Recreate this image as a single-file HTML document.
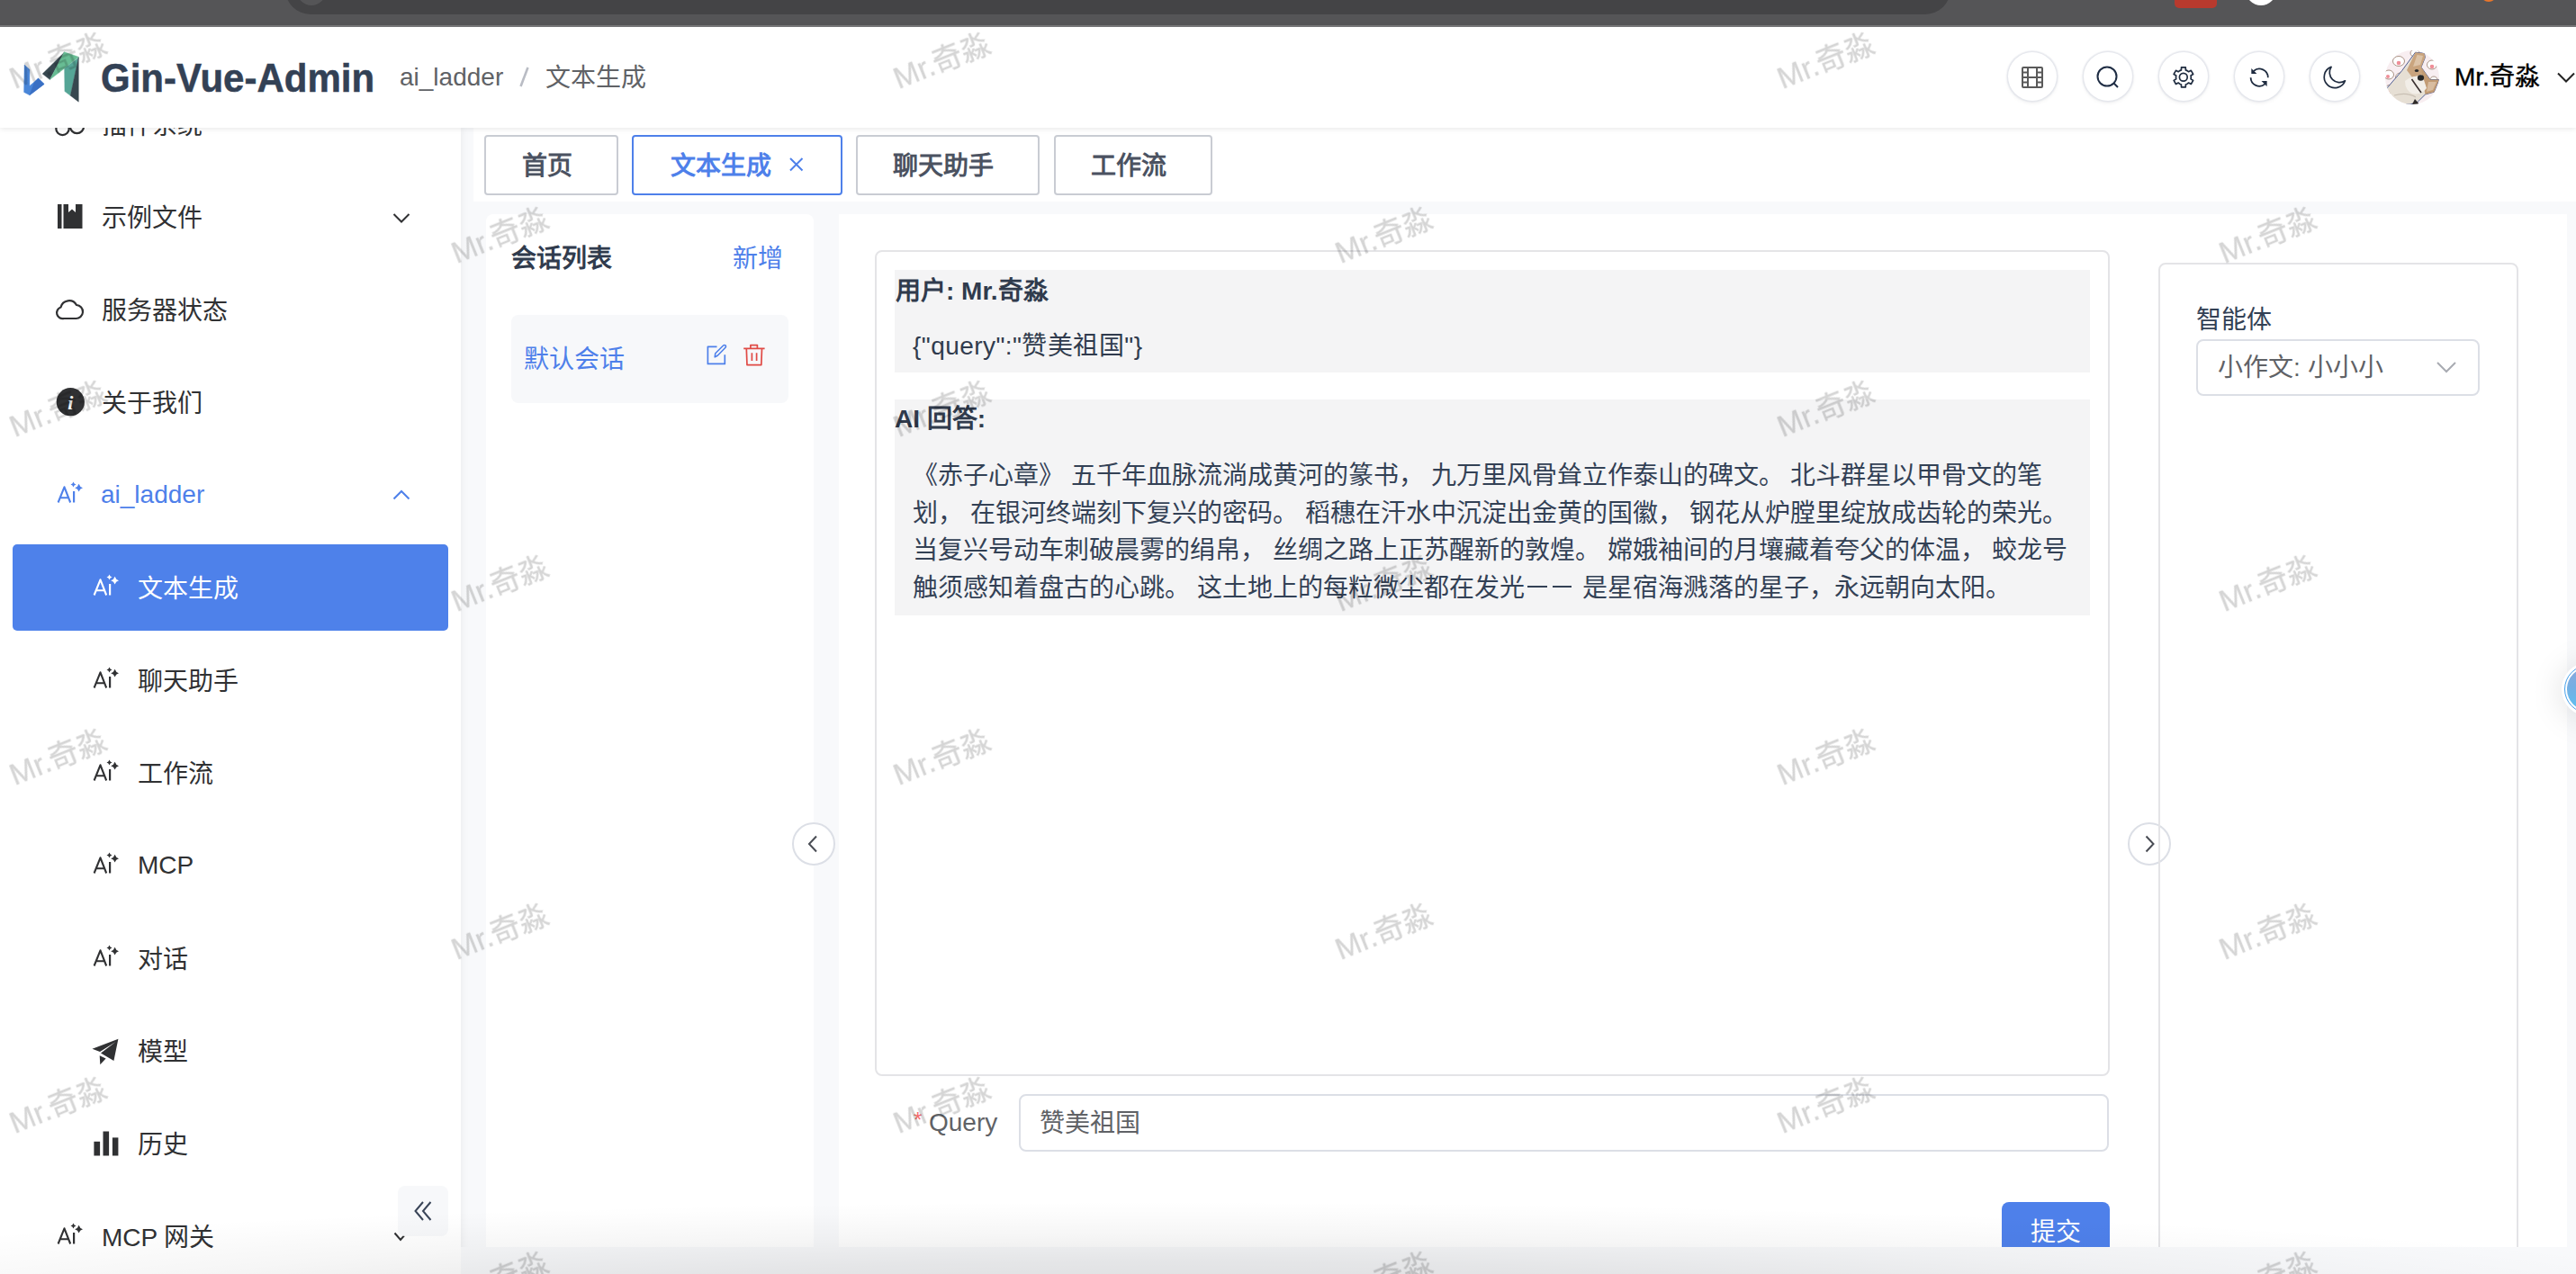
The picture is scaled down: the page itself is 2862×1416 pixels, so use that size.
<!DOCTYPE html>
<html lang="zh-CN"><head><meta charset="utf-8">
<style>
*{box-sizing:border-box;margin:0;padding:0}
html,body{width:2862px;height:1416px;overflow:hidden;background:#f8f9fb;font-family:"Liberation Sans",sans-serif;color:#303133}
.a{position:absolute;white-space:nowrap}
.t28{font-size:28px;line-height:40px}
/* browser bar */
#bbar{position:absolute;left:0;top:0;width:2862px;height:30px;background:#555557;border-bottom:2px solid #78787a}
#pill{position:absolute;left:317px;top:-12px;width:1850px;height:28px;background:#444446;border-radius:0 0 28px 28px}
/* header */
#hdr{position:absolute;left:0;top:30px;width:2862px;height:112px;background:#fff;box-shadow:0 1px 6px rgba(0,0,0,0.1);z-index:5}
/* sidebar */
#side{position:absolute;left:0;top:142px;width:512px;height:1274px;background:#fff;box-shadow:2px 0 8px rgba(0,0,0,0.05);z-index:2}
.mi{position:absolute;left:0;width:512px;height:96px}
.ic{position:absolute}
.tabbar{position:absolute;left:526px;top:142px;width:2336px;height:82px;background:#fff}
.tab{position:absolute;top:150px;height:67px;border:2px solid #c9ccd3;border-radius:4px;background:#fff;font-size:28px;line-height:66px;font-weight:bold;color:#4b5261;text-align:left}
.panel{position:absolute;background:#fff}
.circ{position:absolute;width:54px;height:54px;border-radius:50%;background:#fff;box-shadow:0 0 1.5px 1.5px #e3e5eb,0 2px 5px rgba(0,0,0,0.07)}
</style></head><body>

<div id="bbar"><div id="pill"></div>
<div class="a" style="left:330px;top:-26px;width:32px;height:32px;border-radius:50%;background:#555557"></div>
<div class="a" style="left:2416px;top:-10px;width:47px;height:19px;border-radius:5px;background:#b83a2e"></div>
<div class="a" style="left:2495px;top:-28px;width:34px;height:34px;border-radius:50%;background:#fff"></div>
<div class="a" style="left:2756px;top:-16px;width:18px;height:18px;border-radius:50%;background:#e8762c"></div>
</div>

<div id="hdr">
  <!-- logo -->
  <svg class="a" style="left:0;top:-30px" width="100" height="150" viewBox="0 0 100 150">
    
    <polygon points="27.1,72 32.9,77.2 32.9,95.6 42.5,87.1 49.1,93.4 32.9,105.8 26.6,102.5" fill="#4a86d8" stroke="#4a86d8" stroke-width="0.4" stroke-linejoin="round"/>
    <polygon points="42.5,87.1 49.1,93.4 32.9,105.8 38,92" fill="#3a70c4" stroke="#3a70c4" stroke-width="0.4" stroke-linejoin="round"/>
    <polygon points="47.2,82.1 71.4,58.2 55.4,88.5" fill="#37474f" stroke="#37474f" stroke-width="0.4" stroke-linejoin="round"/>
    <polygon points="71.4,57.7 87.3,63.2 71.6,76.1 55.4,88.5" fill="#68bd94" stroke="#68bd94" stroke-width="0.4" stroke-linejoin="round"/>
    <polygon points="71.6,76.1 87.3,64 78.2,106.3 71.9,101.6" fill="#55a596" stroke="#55a596" stroke-width="0.4" stroke-linejoin="round"/>
    <polygon points="87.3,63.5 87.3,113.2 78.2,106.3" fill="#37474f" stroke="#37474f" stroke-width="0.4" stroke-linejoin="round"/>
  </svg>
  <div class="a" style="left:112px;top:28px;font-size:42px;line-height:60px;font-weight:bold;color:#334155;transform:scale(1,1.07);transform-origin:0 44.5px;-webkit-text-stroke:0.5px #334155">Gin-Vue-Admin</div>
  <div class="a t28" style="left:444px;top:36px;color:#606266">ai_ladder</div>
  <svg class="a" style="left:570px;top:40px" width="24" height="30"><line x1="16.5" y1="5" x2="8.5" y2="26" stroke="#b9bcc4" stroke-width="2.6"/></svg>
  <div class="a t28" style="left:606px;top:37px;color:#606266">文本生成</div>

  <!-- circle buttons -->
  <div class="circ" style="left:2231px;top:28px"></div>
  <div class="circ" style="left:2315px;top:28px"></div>
  <div class="circ" style="left:2399px;top:28px"></div>
  <div class="circ" style="left:2483px;top:28px"></div>
  <div class="circ" style="left:2567px;top:28px"></div>
  <svg class="a" style="left:0;top:0" width="2862" height="112" viewBox="0 30 2862 112">
    <!-- grid/film icon -->
    <g fill="none" stroke="#5a5a5a" stroke-width="2">
      <rect x="2247" y="75" width="22" height="22" rx="1"/>
      <line x1="2253" y1="75" x2="2253" y2="97"/>
      <line x1="2263" y1="75" x2="2263" y2="97"/>
      <line x1="2253" y1="86" x2="2263" y2="86"/>
      <line x1="2247" y1="80.5" x2="2253" y2="80.5"/><line x1="2247" y1="86" x2="2253" y2="86"/><line x1="2247" y1="91.5" x2="2253" y2="91.5"/>
      <line x1="2263" y1="80.5" x2="2269" y2="80.5"/><line x1="2263" y1="86" x2="2269" y2="86"/><line x1="2263" y1="91.5" x2="2269" y2="91.5"/>
    </g>
    <!-- search -->
    <g fill="none" stroke="#1f2d44" stroke-width="2">
      <circle cx="2341" cy="85" r="10.5"/>
      <line x1="2348.5" y1="92.5" x2="2353" y2="97"/>
    </g>
    <!-- gear -->
    <g fill="none" stroke="#1e2b3f" stroke-width="1.7" stroke-linejoin="round">
      <path d="M2421.70,78.63 L2423.44,77.87 L2423.55,74.85 L2428.25,74.85 L2428.36,77.87 L2430.10,78.63 L2431.63,79.76 L2434.30,78.34 L2436.65,82.41 L2434.08,84.01 L2434.30,85.90 L2434.08,87.79 L2436.65,89.39 L2434.30,93.46 L2431.63,92.04 L2430.10,93.17 L2428.36,93.93 L2428.25,96.95 L2423.55,96.95 L2423.44,93.93 L2421.70,93.17 L2420.17,92.04 L2417.50,93.46 L2415.15,89.39 L2417.72,87.79 L2417.50,85.90 L2417.72,84.01 L2415.15,82.41 L2417.50,78.34 L2420.17,79.76 Z"/>
      <circle cx="2425.8" cy="85.8" r="4.4"/>
    </g>
    <!-- refresh -->
    <g fill="none" stroke="#1e2b3f" stroke-width="1.8">
      <path d="M2519.8,86.2 A9.6,9.6 0 0 0 2503.8,79"/>
      <path d="M2500.6,86.2 A9.6,9.6 0 0 0 2516.4,93.4"/>
    </g>
    <g fill="#1e2b3f">
      <path d="M2501.3,76 L2501.3,82.1 L2507.4,82.1 Z"/>
      <path d="M2518.6,90 L2518.6,96.1 L2512.5,90 Z"/>
    </g>
    <!-- moon -->
    <path d="M2590.1,74.4 A12,12 0 1 0 2605.5,89.8 A11.1,11.1 0 0 1 2590.1,74.4 Z" fill="none" stroke="#1e2b3f" stroke-width="1.7" stroke-linejoin="round"/>
    <!-- chevron -->
    <polyline points="2842,81.5 2851,90.5 2860,81.5" fill="none" stroke="#222" stroke-width="2"/>
  </svg>
  <!-- avatar -->
  <div class="a" style="left:2650px;top:26px;width:60px;height:60px;border-radius:50%;overflow:hidden">
    <svg width="60" height="60" viewBox="0 0 60 60">
      <rect width="60" height="60" fill="#f8eef1"/>
      <g fill="#fff" stroke="#a08878" stroke-width="0.9">
        <ellipse cx="15" cy="12" rx="6.5" ry="5.5"/><ellipse cx="4" cy="27" rx="5.5" ry="5"/><ellipse cx="17" cy="30" rx="5.5" ry="5"/><ellipse cx="33" cy="3" rx="5" ry="4"/><ellipse cx="52" cy="16" rx="5.5" ry="5"/><ellipse cx="54" cy="34" rx="4.5" ry="5"/><ellipse cx="5" cy="43" rx="5" ry="4.5"/>
      </g>
      <g fill="#ef8e98"><circle cx="15" cy="14" r="2.3"/><circle cx="3" cy="29" r="2"/><circle cx="52" cy="18" r="2.3"/><circle cx="5" cy="45" r="2"/><circle cx="17" cy="33" r="1.8"/></g>
      <path d="M2.1,41.8 L18.6,22.6 L33.5,2.2 L43.4,3.3 L44.4,7.7 L40,18.7 L49.9,32.5 L59.8,32.5 L54.3,46.2 L44.5,49 L36.2,57.2 L28,60 L0,60 Z" fill="#e6dfd4" stroke="#3d4f8a" stroke-width="0.9"/>
      <path d="M33.5,2.2 L43.4,3.3 L44.4,7.7 L40,18.7 L44,26 L30,30 L24,22 Z" fill="#c9a47e"/>
      <path d="M35.5,5 L42,6 L39,16 L31,18 Z" fill="#dcc3a8"/>
      <path d="M40,18.7 L49.9,32.5 L59.8,32.5 L54.3,46.2 L44.5,49 L42,36 Z" fill="#c29b74"/>
      <path d="M48,35 L57,35 L53,44 L46,46 Z" fill="#d8bca0"/>
      <path d="M22,34 Q32,26 42,30 L46,42 Q40,50 30,48 Q22,44 22,34 Z" fill="#f2eee8"/>
      <ellipse cx="39.5" cy="30.5" rx="3.6" ry="3.2" fill="#262626"/>
      <ellipse cx="35" cy="22.6" rx="2.2" ry="1.5" fill="#2a2a2a"/>
      <path d="M29.5,32 L35,40 L40,47" stroke="#3a3030" stroke-width="1.6" fill="none"/>
      <path d="M10,50 Q24,46 34,52" stroke="#c9c0b4" stroke-width="1.2" fill="none"/>
      <path d="M33,54 L38,60 L30,60 Z" fill="#2e2a28"/>
    </svg>
  </div>
  <div class="a" style="left:2727px;top:36px;font-size:28px;line-height:40px;color:#000;-webkit-text-stroke:0.4px #000">Mr.奇淼</div>
</div>

<div id="side"></div>
<div id="sidec" style="position:absolute;left:0;top:0;z-index:3"><svg width="0" height="0" style="position:absolute"><symbol id="ai" viewBox="95 730 50 50" width="50" height="50" overflow="visible">
 <path d="M104.6,764.5 L111.5,747.3 L118.2,764.5 M106.6,759.2 L116.2,759.2" fill="none" stroke="currentColor" stroke-width="2.1" stroke-linejoin="round"/>
 <line x1="122.1" y1="752" x2="122.1" y2="764.5" stroke="currentColor" stroke-width="2.2"/>
 <path d="M121.5,741.5 Q122.16,743.84 124.5,744.5 Q122.16,745.16 121.5,747.5 Q120.84,745.16 118.5,744.5 Q120.84,743.84 121.5,741.5 Z" fill="currentColor"/>
 <path d="M127.6,743.8000000000001 Q128.56799999999998,747.2320000000001 132.0,748.2 Q128.56799999999998,749.168 127.6,752.6 Q126.63199999999999,749.168 123.19999999999999,748.2 Q126.63199999999999,747.2320000000001 127.6,743.8000000000001 Z" fill="currentColor"/>
</symbol></svg>
<div class="a" style="left:14px;top:605px;width:484px;height:96px;background:#4e81ea;border-radius:5px"></div>
<svg class="a" style="left:0;top:0;overflow:visible" width="1" height="1"><circle cx="69.5" cy="143" r="7.2" fill="none" stroke="#303133" stroke-width="2.2"/><circle cx="85.5" cy="140.5" r="7.6" fill="none" stroke="#303133" stroke-width="2.2"/></svg>
<div class="a t28" style="left:113px;top:119.5px;color:#303133;">插件系统</div>
<svg class="a" style="left:64px;top:227px" width="30" height="28"><rect x="0" y="0" width="4.5" height="27" fill="#303133"/><path d="M6.5,0 H12 V9 L16,5.5 L20,9 V0 H27.5 V27 H6.5 Z" fill="#303133"/></svg>
<div class="a t28" style="left:113px;top:222.5px;color:#303133;">示例文件</div>
<svg class="a" style="left:430px;top:221px;overflow:visible" width="32" height="40"><polyline points="7.5,17 16,25.5 24.5,17" fill="none" stroke="#303133" stroke-width="2"/></svg>
<svg class="a" style="left:60px;top:328px;overflow:visible" width="36" height="30"><path d="M11,26 H24 A7.5,7.5 0 0 0 25,11 A9.5,9.5 0 0 0 7.5,13.5 A6.5,6.5 0 0 0 11,26 Z" fill="none" stroke="#303133" stroke-width="2.2"/></svg>
<div class="a t28" style="left:113px;top:325.5px;color:#303133;">服务器状态</div>
<svg class="a" style="left:61px;top:430px" width="34" height="34"><circle cx="17.3" cy="16.7" r="15.6" fill="#303133"/><text x="17.3" y="24.5" text-anchor="middle" font-family="Liberation Serif" font-style="italic" font-weight="bold" font-size="22" fill="#fff">i</text></svg>
<div class="a t28" style="left:113px;top:428.5px;color:#303133;">关于我们</div>
<svg class="a" style="left:55px;top:524px;color:#4e80ea;overflow:visible" width="50" height="50"><use href="#ai"/></svg>
<div class="a t28" style="left:112px;top:530px;color:#4e80ea">ai_ladder</div>
<svg class="a" style="left:430px;top:530px;overflow:visible" width="32" height="40"><polyline points="7.5,24.5 16,16 24.5,24.5" fill="none" stroke="#4e80ea" stroke-width="2"/></svg>
<svg class="a" style="left:95px;top:627px;color:#fff;overflow:visible" width="50" height="50"><use href="#ai"/></svg>
<div class="a t28" style="left:153px;top:634.5px;color:#fff;">文本生成</div>
<svg class="a" style="left:95px;top:730px;color:#303133;overflow:visible" width="50" height="50"><use href="#ai"/></svg>
<div class="a t28" style="left:153px;top:737.5px;color:#303133;">聊天助手</div>
<svg class="a" style="left:95px;top:833px;color:#303133;overflow:visible" width="50" height="50"><use href="#ai"/></svg>
<div class="a t28" style="left:153px;top:840.5px;color:#303133;">工作流</div>
<svg class="a" style="left:95px;top:936px;color:#303133;overflow:visible" width="50" height="50"><use href="#ai"/></svg>
<div class="a t28" style="left:153px;top:942px;color:#303133">MCP</div>
<svg class="a" style="left:95px;top:1039px;color:#303133;overflow:visible" width="50" height="50"><use href="#ai"/></svg>
<div class="a t28" style="left:153px;top:1046.5px;color:#303133;">对话</div>
<svg class="a" style="left:0;top:0;overflow:visible" width="1" height="1"><path d="M102.5,1165.8 L131.4,1154.8 L126.4,1178.9 L112,1170.5 L128.5,1158 L111,1169 Z M110.7,1173.3 L111.3,1183.3 L117.6,1176.4 Z" fill="#303133"/></svg>
<div class="a t28" style="left:153px;top:1149.5px;color:#303133;">模型</div>
<svg class="a" style="left:0;top:0;overflow:visible" width="1" height="1"><rect x="104.4" y="1268.8" width="6.7" height="15.7" fill="#303133"/><rect x="114.5" y="1257.5" width="6.6" height="27" fill="#303133"/><rect x="124.9" y="1264.4" width="6.5" height="20.1" fill="#303133"/></svg>
<div class="a t28" style="left:153px;top:1252.5px;color:#303133;">历史</div>
<svg class="a" style="left:55px;top:1348px;color:#303133;overflow:visible" width="50" height="50"><use href="#ai"/></svg>
<div class="a t28" style="left:113px;top:1356px;color:#303133">MCP 网关</div>
<svg class="a" style="left:0;top:0;overflow:visible" width="1" height="1"><polyline points="438.5,1370.5 445,1378 451.5,1370.5" fill="none" stroke="#303133" stroke-width="2"/></svg>
<div class="a" style="left:442px;top:1318px;width:56px;height:56px;background:#f7f8fa;border-radius:8px"></div>
<svg class="a" style="left:0;top:0;overflow:visible" width="1" height="1"><polyline points="470,1336 461.5,1346 470,1356" fill="none" stroke="#3a4558" stroke-width="2"/><polyline points="478.5,1336 470,1346 478.5,1356" fill="none" stroke="#3a4558" stroke-width="2"/></svg></div>

<div class="tabbar"></div>
<div id="content" style="position:absolute;left:0;top:0;z-index:1"><div class="tab" style="left:538px;width:149px;padding-left:40px">首页</div>
<div class="tab" style="left:702px;width:234px;border-color:#4e80ea;color:#4e80ea;padding-left:41px">文本生成</div>
<svg class="a" style="left:0;top:0;overflow:visible;z-index:1" width="1" height="1"><path d="M878,176 L891.5,189.5 M891.5,176 L878,189.5" stroke="#4e80ea" stroke-width="2"/></svg>
<div class="tab" style="left:951px;width:204px;padding-left:39px">聊天助手</div>
<div class="tab" style="left:1171px;width:176px;padding-left:39px">工作流</div>
<div class="panel" style="left:540px;top:238px;width:364px;height:1148px;border-radius:8px 8px 0 0"></div>
<div class="a t28" style="left:568px;top:268px;font-weight:bold;color:#303b4d">会话列表</div>
<div class="a t28" style="left:814px;top:268px;color:#4e80ea">新增</div>
<div class="a" style="left:568px;top:350px;width:308px;height:98px;background:#f7f8fa;border-radius:8px"></div>
<div class="a t28" style="left:582px;top:380px;color:#4e80ea">默认会话</div>
<svg class="a" style="left:0;top:0;overflow:visible" width="1" height="1">
<path d="M796.5,385.3 H786.4 V404.4 H805.3 V394.3" fill="none" stroke="#4e80ea" stroke-width="1.7" stroke-linejoin="round"/>
<path d="M794.2,396.9 L794.8,392.7 L803.6,384 A1.6,1.6 0 0 1 806,386.3 L797.2,395.2 Z" fill="none" stroke="#4e80ea" stroke-width="1.6" stroke-linejoin="round"/>
<path d="M826.2,387.4 H849.6 M829.3,387.4 L830,405.7 H845.8 L846.5,387.4 M833.9,387.4 V383.6 H841.4 V387.4 M835.4,392.3 V401 M840.6,392.3 V401" fill="none" stroke="#e04a45" stroke-width="1.7" stroke-linejoin="round"/>
</svg>
<div class="panel" style="left:932px;top:238px;width:1920px;height:1148px"></div>
<div class="a" style="left:972px;top:278px;width:1372px;height:918px;border:2px solid #e4e4e7;border-radius:8px"></div>
<div class="a" style="left:994px;top:300px;width:1328px;height:114px;background:#f4f4f5"></div>
<div class="a t28" style="left:995px;top:303.5px;font-weight:bold;color:#303b4d">用户: Mr.奇淼</div>
<div class="a t28" style="left:1014px;top:365px;color:#303b4d;letter-spacing:0.45px">{"query":"赞美祖国"}</div>
<div class="a" style="left:994px;top:444px;width:1328px;height:240px;background:#f4f4f5"></div>
<div class="a t28" style="left:994px;top:446px;font-weight:bold;color:#303b4d">AI 回答:</div>
<div class="a t28" style="left:1014px;top:509.0px;color:#334155">《赤子心章》 五千年血脉流淌成黄河的篆书， 九万里风骨耸立作泰山的碑文。 北斗群星以甲骨文的笔</div>
<div class="a t28" style="left:1014px;top:550.7px;color:#334155">划， 在银河终端刻下复兴的密码。 稻穗在汗水中沉淀出金黄的国徽， 钢花从炉膛里绽放成齿轮的荣光。</div>
<div class="a t28" style="left:1014px;top:592.4px;color:#334155">当复兴号动车刺破晨雾的绢帛， 丝绸之路上正苏醒新的敦煌。 嫦娥袖间的月壤藏着夸父的体温， 蛟龙号</div>
<div class="a t28" style="left:1014px;top:634.1px;color:#334155">触须感知着盘古的心跳。 这土地上的每粒微尘都在发光<span style="display:inline-block;width:56px;height:10px;position:relative;vertical-align:baseline"><i style="position:absolute;left:3px;top:-2px;width:22px;height:2px;background:#334155"></i><i style="position:absolute;left:31px;top:-2px;width:21px;height:2px;background:#334155"></i></span> 是星宿海溅落的星子，永远朝向太阳。</div>
<div class="a" style="left:880px;top:914px;width:48px;height:48px;border-radius:50%;background:#fff;border:2px solid #dcdfe6"></div>
<div class="a" style="left:2364px;top:914px;width:48px;height:48px;border-radius:50%;background:#fff;border:2px solid #dcdfe6"></div>
<svg class="a" style="left:0;top:0;overflow:visible" width="1" height="1">
<polyline points="907,929.5 899,938 907,946.5" fill="none" stroke="#4a4d55" stroke-width="2"/>
<polyline points="2384.5,929.5 2392.5,938 2384.5,946.5" fill="none" stroke="#4a4d55" stroke-width="2"/>
</svg>
<div class="a" style="left:1015px;top:1229px;font-size:24px;line-height:32px;color:#f56c6c">*</div>
<div class="a t28" style="left:1032px;top:1228px;color:#606266">Query</div>
<div class="a" style="left:1132px;top:1216px;width:1211px;height:64px;border:2px solid #dcdfe6;border-radius:8px;background:#fff"></div>
<div class="a t28" style="left:1155px;top:1229px;color:#606266">赞美祖国</div>
<div class="a" style="left:2224px;top:1336px;width:120px;height:64px;background:#4e80ea;border-radius:8px"></div>
<div class="a t28" style="left:2256px;top:1350px;color:#fff">提交</div>
<div class="a" style="left:2398px;top:292px;width:400px;height:1200px;border:2px solid #e4e4e7;border-radius:8px"></div>
<div class="a t28" style="left:2440px;top:336px;color:#334155">智能体</div>
<div class="a" style="left:2440px;top:377px;width:315px;height:63px;border:2px solid #dcdfe6;border-radius:8px;background:#fff"></div>
<div class="a t28" style="left:2464px;top:389px;color:#606266">小作文: 小小小</div>
<svg class="a" style="left:0;top:0;overflow:visible" width="1" height="1"><polyline points="2708,403 2718,413 2728,403" fill="none" stroke="#a8abb2" stroke-width="2"/></svg></div>

<div class="a" style="left:2846px;top:736px;width:60px;height:60px;border-radius:50%;background:#fff;box-shadow:0 3px 36px rgba(0,0,0,0.13);z-index:4"></div>
<div class="a" style="left:2849px;top:739px;width:54px;height:54px;border-radius:50%;border:1.8px solid #45a0ea;z-index:4;padding:2.2px"><div style="width:100%;height:100%;border-radius:50%;background:linear-gradient(180deg,#8aa8dc 0%,#72b0e4 50%,#5cc2f2 100%)"></div></div>
<div class="a" style="left:512px;top:1386px;width:2350px;height:30px;background:#f8f9fb;z-index:10"></div><div class="a" style="left:0;top:1316px;width:2862px;height:100px;z-index:11;background:radial-gradient(ellipse 1800px 115px at 1300px 134px, rgba(0,0,0,0.12) 0%, rgba(0,0,0,0.08) 42%, rgba(0,0,0,0.035) 68%, rgba(0,0,0,0.01) 88%, rgba(0,0,0,0) 100%)"></div>
<svg class="a" style="left:0;top:0;z-index:20;pointer-events:none" width="2862" height="1416"><g font-family="Liberation Sans, sans-serif" font-size="33.5" fill="#000" stroke="#000" stroke-width="0.35" opacity="0.165" text-anchor="middle"><text x="64" y="79" transform="rotate(-22 64 67)">Mr.奇淼</text><text x="1046" y="79" transform="rotate(-22 1046 67)">Mr.奇淼</text><text x="2028" y="79" transform="rotate(-22 2028 67)">Mr.奇淼</text><text x="64" y="466" transform="rotate(-22 64 454)">Mr.奇淼</text><text x="1046" y="466" transform="rotate(-22 1046 454)">Mr.奇淼</text><text x="2028" y="466" transform="rotate(-22 2028 454)">Mr.奇淼</text><text x="64" y="853" transform="rotate(-22 64 841)">Mr.奇淼</text><text x="1046" y="853" transform="rotate(-22 1046 841)">Mr.奇淼</text><text x="2028" y="853" transform="rotate(-22 2028 841)">Mr.奇淼</text><text x="64" y="1240" transform="rotate(-22 64 1228)">Mr.奇淼</text><text x="1046" y="1240" transform="rotate(-22 1046 1228)">Mr.奇淼</text><text x="2028" y="1240" transform="rotate(-22 2028 1228)">Mr.奇淼</text><text x="555" y="273" transform="rotate(-22 555 261)">Mr.奇淼</text><text x="1537" y="273" transform="rotate(-22 1537 261)">Mr.奇淼</text><text x="2519" y="273" transform="rotate(-22 2519 261)">Mr.奇淼</text><text x="555" y="660" transform="rotate(-22 555 648)">Mr.奇淼</text><text x="1537" y="660" transform="rotate(-22 1537 648)">Mr.奇淼</text><text x="2519" y="660" transform="rotate(-22 2519 648)">Mr.奇淼</text><text x="555" y="1047" transform="rotate(-22 555 1035)">Mr.奇淼</text><text x="1537" y="1047" transform="rotate(-22 1537 1035)">Mr.奇淼</text><text x="2519" y="1047" transform="rotate(-22 2519 1035)">Mr.奇淼</text><text x="555" y="1434" transform="rotate(-22 555 1422)">Mr.奇淼</text><text x="1537" y="1434" transform="rotate(-22 1537 1422)">Mr.奇淼</text><text x="2519" y="1434" transform="rotate(-22 2519 1422)">Mr.奇淼</text></g></svg>
</body></html>
